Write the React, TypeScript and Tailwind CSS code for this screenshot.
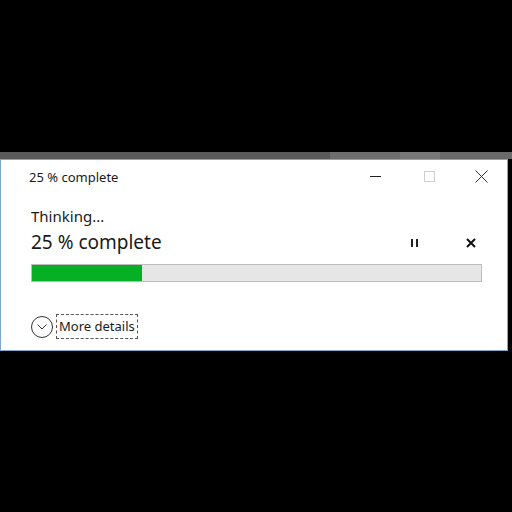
import React from "react";

export default function App() {
  const pct = 25;
  return (
    <div className="w-[512px] h-[512px] bg-black overflow-hidden" style={{ fontFamily: '"Noto Sans", "Open Sans", sans-serif' }}>
      <div className="h-[152px]" />
      <div className="h-[7px] w-[512px] flex">
        <div className="w-[330px] bg-[#5a5a5a]" />
        <div className="w-[70px] bg-[#6e6e6e]" />
        <div className="w-[40px] bg-[#777777]" />
        <div className="flex-1 bg-[#6a6a6a]" />
      </div>
      <div className="w-[508px] h-[192px] bg-white border border-[#7ea6cf] flex flex-col">
        {/* title bar */}
        <div className="h-[32px] flex items-center">
          <div className="pl-[28px] text-[13px] text-[#1a1a1a] leading-none pt-[2px]">25 % complete</div>
          <div className="flex-1" />
          <div className="w-[46px] h-[32px] flex items-center justify-center">
            <div className="w-[11px] h-[1px] bg-[#222]" />
          </div>
          <div className="w-[58px] h-[32px] flex items-center justify-center ml-[2px]">
            <div className="w-[11px] h-[11px] border border-[#cfcfcf]" />
          </div>
          <div className="w-[46px] h-[32px] flex items-center justify-center mr-[3px]">
            <svg width="13" height="13" viewBox="0 0 13 13">
              <path d="M0.5 0.5 L12.5 12.5 M12.5 0.5 L0.5 12.5" stroke="#333" strokeWidth="1" />
            </svg>
          </div>
        </div>
        {/* body */}
        <div className="pl-[30px] pr-[26px] flex flex-col">
          <div className="text-[15px] text-[#1a1a1a] leading-[20px] mt-[14px]">Thinking...</div>
          <div className="flex items-center mt-[4px]">
            <div className="text-[19px] text-[#1a1a1a] leading-[24px]">25 % complete</div>
            <div className="flex-1" />
            <div className="flex gap-[3px] mr-[48px] mt-[2px]">
              <div className="w-[2px] h-[8px] bg-[#222]" />
              <div className="w-[2px] h-[8px] bg-[#222]" />
            </div>
            <div className="mr-[5px] mt-[2px]">
              <svg width="10" height="10" viewBox="0 0 10 10">
                <path d="M1 1 L9 9 M9 1 L1 9" stroke="#111" strokeWidth="2" />
              </svg>
            </div>
          </div>
          <div className="mt-[10px] w-[451px] h-[18px] bg-[#e6e6e6] border border-[#bcbcbc]">
            <div className="h-full bg-[#06b025]" style={{ width: `${pct * 0.98}%` }} />
          </div>
          <div className="flex items-center mt-[32px]">
            <div className="w-[22px] h-[22px] rounded-full border border-[#333] flex items-center justify-center">
              <svg width="10" height="6" viewBox="0 0 10 6">
                <path d="M0.5 0.5 L5 5 L9.5 0.5" stroke="#333" strokeWidth="1" fill="none" />
              </svg>
            </div>
            <div className="ml-[3px] border border-dashed border-[#555] px-[2px] h-[25px] flex items-center text-[13px] text-[#1a1a1a]">More details</div>
          </div>
        </div>
      </div>
    </div>
  );
}
